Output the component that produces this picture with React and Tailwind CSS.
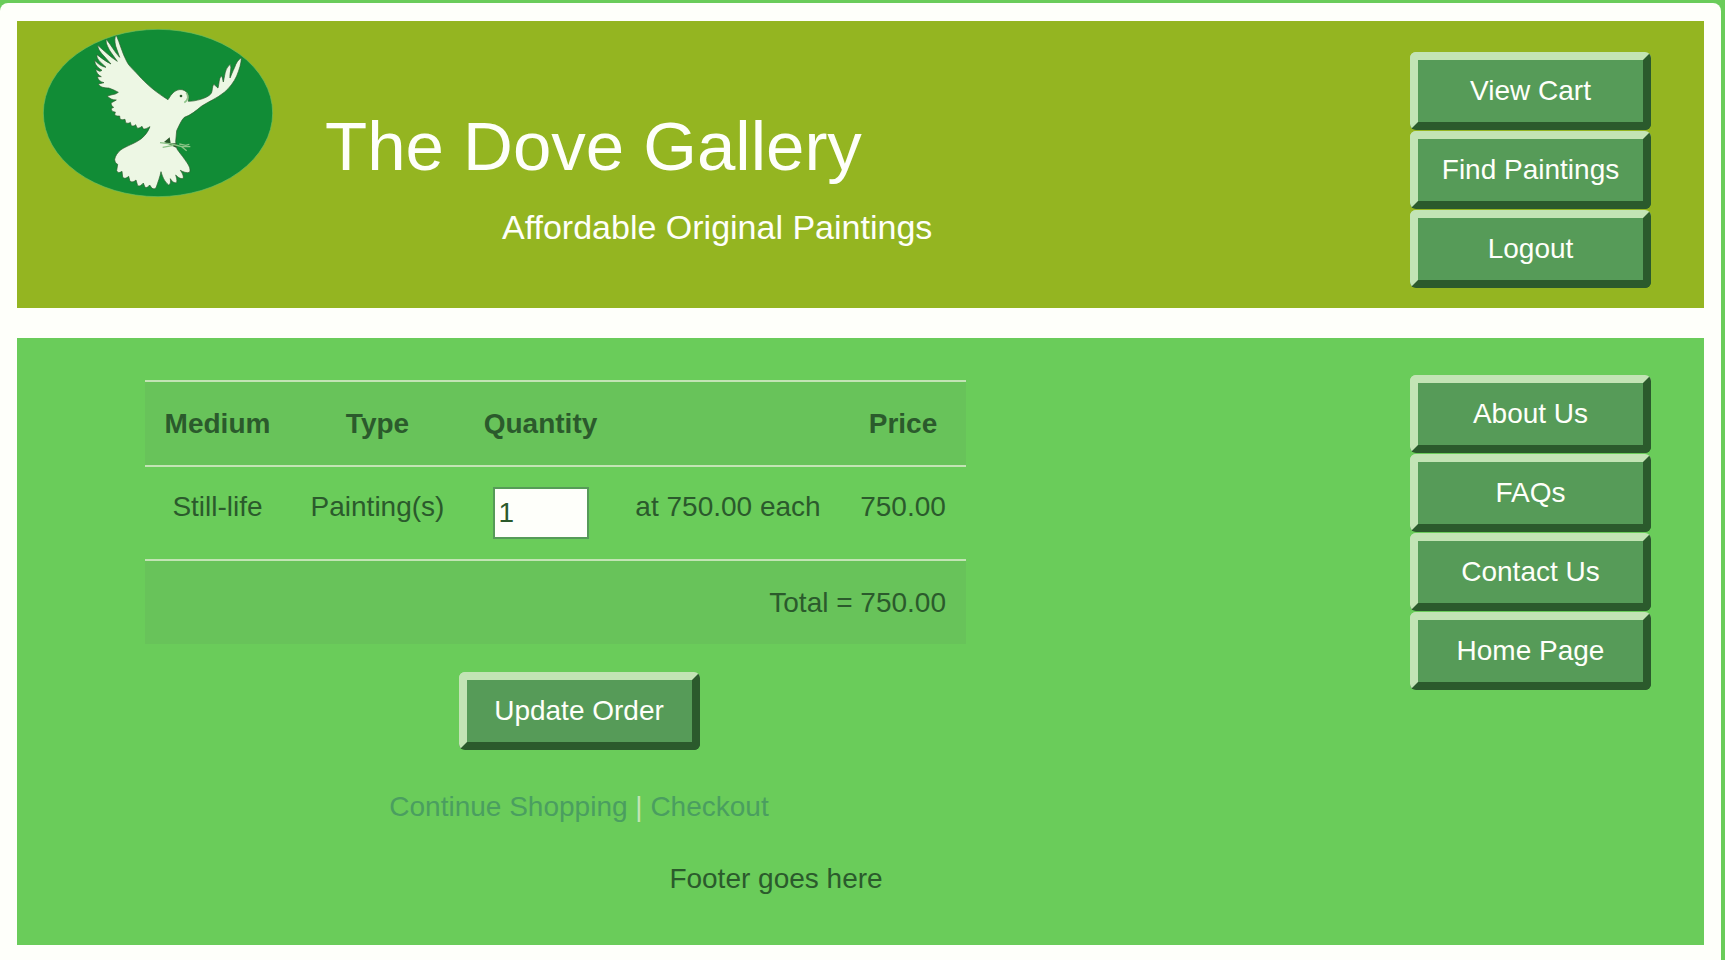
import React from "react";

function DoveLogo() {
  return (
    <svg
      viewBox="129 87 690 504"
      className="h-[168px] w-[230px] shrink-0"
      role="img"
      aria-label="White dove in flight"
    >
      <ellipse cx="474" cy="339" rx="344" ry="251" fill="#118c36" stroke="#6cc062" strokeWidth="2" />
      <path
        fill="#edf7e4"
        stroke="#2b5a2c"
        strokeWidth="2"
        strokeLinejoin="round"
        d="M504 299
           C470 278 446 258 424 235 C400 208 388 200 380 184 C366 158 360 130 349 106
           C343 112 344 124 347 138 L359 172 C345 158 334 136 319 118
           C316 128 324 142 330 153 L352 184 C332 172 310 150 293 136
           C293 146 302 158 310 166 L333 192 C316 184 302 172 291 164
           C289 172 296 182 303 188 L318 202 C304 200 292 190 284 181
           C284 194 294 204 306 211 L300 214 C294 212 290 210 287 206
           C288 218 296 226 304 230 L292 230 C294 240 302 246 312 248 L295 252
           C300 262 314 264 326 264 C338 268 346 272 355 277 L346 282
           C336 284 329 286 322 288 C328 296 338 300 349 300
           L333 309 C334 316 337 320 341 322 L333 326 C336 334 340 336 346 336
           L344 344 C350 349 354 348 359 348 L360 357 C366 360 370 359 375 358
           L377 368 C382 371 388 370 391 367 L394 377 C400 379 404 377 407 374
           L411 384 C416 386 422 382 426 379 L430 387 C436 388 442 384 450 380
           C442 400 430 414 412 424 C394 434 372 442 362 450 C352 458 346 468 344 478
           C344 486 348 490 353 493 L350 512 C354 520 360 518 366 514
           L368 531 C374 538 380 534 386 529 L390 544 C398 548 403 544 408 540
           L413 557 C420 560 425 555 430 549 L435 562 C441 564 445 560 449 555
           L456 565 C462 568 468 566 469 561 C474 546 480 530 483 515
           C487 528 492 544 506 555 C512 554 512 544 511 536 C516 544 522 550 530 548
           C532 540 529 532 527 525 C534 532 542 538 550 535 C551 526 546 518 541 511
           C550 516 560 520 569 517 C574 504 562 490 554 478 C546 466 538 458 531 447
           L527 425 L530 392 C538 376 544 360 553 352 C572 346 588 332 604 319
           C626 304 650 296 674 276 C688 264 702 246 710 228 C718 208 724 190 724 173
           C716 178 708 188 704 202 C698 214 694 226 690 234
           C688 220 696 206 691 193 C680 200 676 214 674 226 L670 246
           C668 240 668 232 664 227 C656 236 658 250 654 264 C650 262 646 256 641 252
           C636 262 638 270 634 280 C626 290 614 294 602 298 C588 302 576 304 565 304
           C568 290 564 278 554 272 C540 264 524 272 516 282 C510 288 508 294 504 299 Z"
      />
      <path d="M559 278 C566 287 566 298 553 308" fill="none" stroke="#8cc487" strokeWidth="5" />
      <circle cx="543" cy="288" r="4" fill="#2b5a2c" />
      <path d="M492 426 L509 412 L512 430 L530 430 L530 444 Z" fill="#2b5a2c" />
      <path
        d="M480 428 L515 432 L545 440 L571 440 M488 442 L520 436 M538 432 L557 436 L568 433 M545 440 L560 452"
        fill="none"
        stroke="#8cc487"
        strokeWidth="4"
      />
    </svg>
  );
}

const bevel =
  "block h-[78px] w-[241px] cursor-pointer rounded-md border-8 border-t-[#c3e4b5] border-l-[#c3e4b5] border-r-[#2b5a2c] border-b-[#2b5a2c] bg-[#569b58] text-center text-[28px] leading-[62px] text-[#fefffa]";

function SideNav({ label, items }) {
  return (
    <nav aria-label={label} className="flex shrink-0 flex-col gap-px">
      {items.map((item) => (
        <button key={item} type="button" className={bevel}>
          {item}
        </button>
      ))}
    </nav>
  );
}

function CartTable() {
  const line = "border-t-2 border-[#c3e4b5]";
  return (
    <table className="w-[821px] table-fixed border-collapse text-center leading-10">
      <colgroup>
        <col className="w-[145px]" />
        <col className="w-[175px]" />
        <col className="w-[151px]" />
        <col className="w-[224px]" />
        <col className="w-[126px]" />
      </colgroup>
      <thead>
        <tr className={`${line} h-[85px] bg-[#68c35a]`}>
          <th scope="col">Medium</th>
          <th scope="col">Type</th>
          <th scope="col">Quantity</th>
          <td />
          <th scope="col">Price</th>
        </tr>
      </thead>
      <tbody>
        <tr className={`${line} h-[94px] align-top`}>
          <td className="pt-5">Still-life</td>
          <td className="pt-5">Painting(s)</td>
          <td className="pt-5">
            <input
              type="text"
              aria-label="Quantity"
              defaultValue="1"
              className="mx-auto block h-[52px] w-[96px] border-2 border-[#569b58] bg-[#fefffa] px-1"
            />
          </td>
          <td className="pt-5">at 750.00 each</td>
          <td className="pt-5">750.00</td>
        </tr>
        <tr className={`${line} h-[84px] bg-[#68c35a]`}>
          <td colSpan={5} className="pr-5 text-right">
            Total = 750.00
          </td>
        </tr>
      </tbody>
    </table>
  );
}

export default function App() {
  return (
    <div className="flex min-h-screen flex-col bg-[#6acc5a] pt-[3px] pr-1 font-['Liberation_Sans',Arial,sans-serif] text-[28px] text-[#2b5a2c]">
      <div className="flex flex-1 flex-col gap-[30px] rounded-t-lg bg-[#fefffa] px-[17px] pt-[18px] pb-4">
        <header className="flex items-start justify-between bg-[#94b521] pt-2 pr-[53px] pb-5 pl-[26px] text-[#fefffa]">
          <div className="flex">
            <DoveLogo />
            <div className="pt-[78px] pl-[52px]">
              <h1 className="text-[69px] leading-[80px]">The Dove Gallery</h1>
              <p className="pt-5 pl-[177px] text-[34px] leading-[40px]">Affordable Original Paintings</p>
            </div>
          </div>
          <div className="pt-[23px]">
            <SideNav label="Account" items={["View Cart", "Find Paintings", "Logout"]} />
          </div>
        </header>

        <main className="flex items-start justify-between bg-[#6acc5a] pt-[37px] pr-[53px] pb-[46px] pl-32">
          <div>
            <form className="flex w-[868px] flex-col" onSubmit={(e) => e.preventDefault()}>
              <div className="pt-[5px]">
                <CartTable />
              </div>
              <button type="submit" className={`${bevel} mt-7 self-center`}>
                Update Order
              </button>
              <p className="mt-[37px] text-center leading-10">
                <a href="#shop" className="text-[#4a9e60]">Continue Shopping</a>
                <span className="text-[#c3e4b5]"> | </span>
                <a href="#checkout" className="text-[#4a9e60]">Checkout</a>
              </p>
            </form>
            <footer className="-mr-[394px] mt-8 w-[1262px] text-center leading-10">Footer goes here</footer>
          </div>
          <SideNav label="Site" items={["About Us", "FAQs", "Contact Us", "Home Page"]} />
        </main>
      </div>
    </div>
  );
}
